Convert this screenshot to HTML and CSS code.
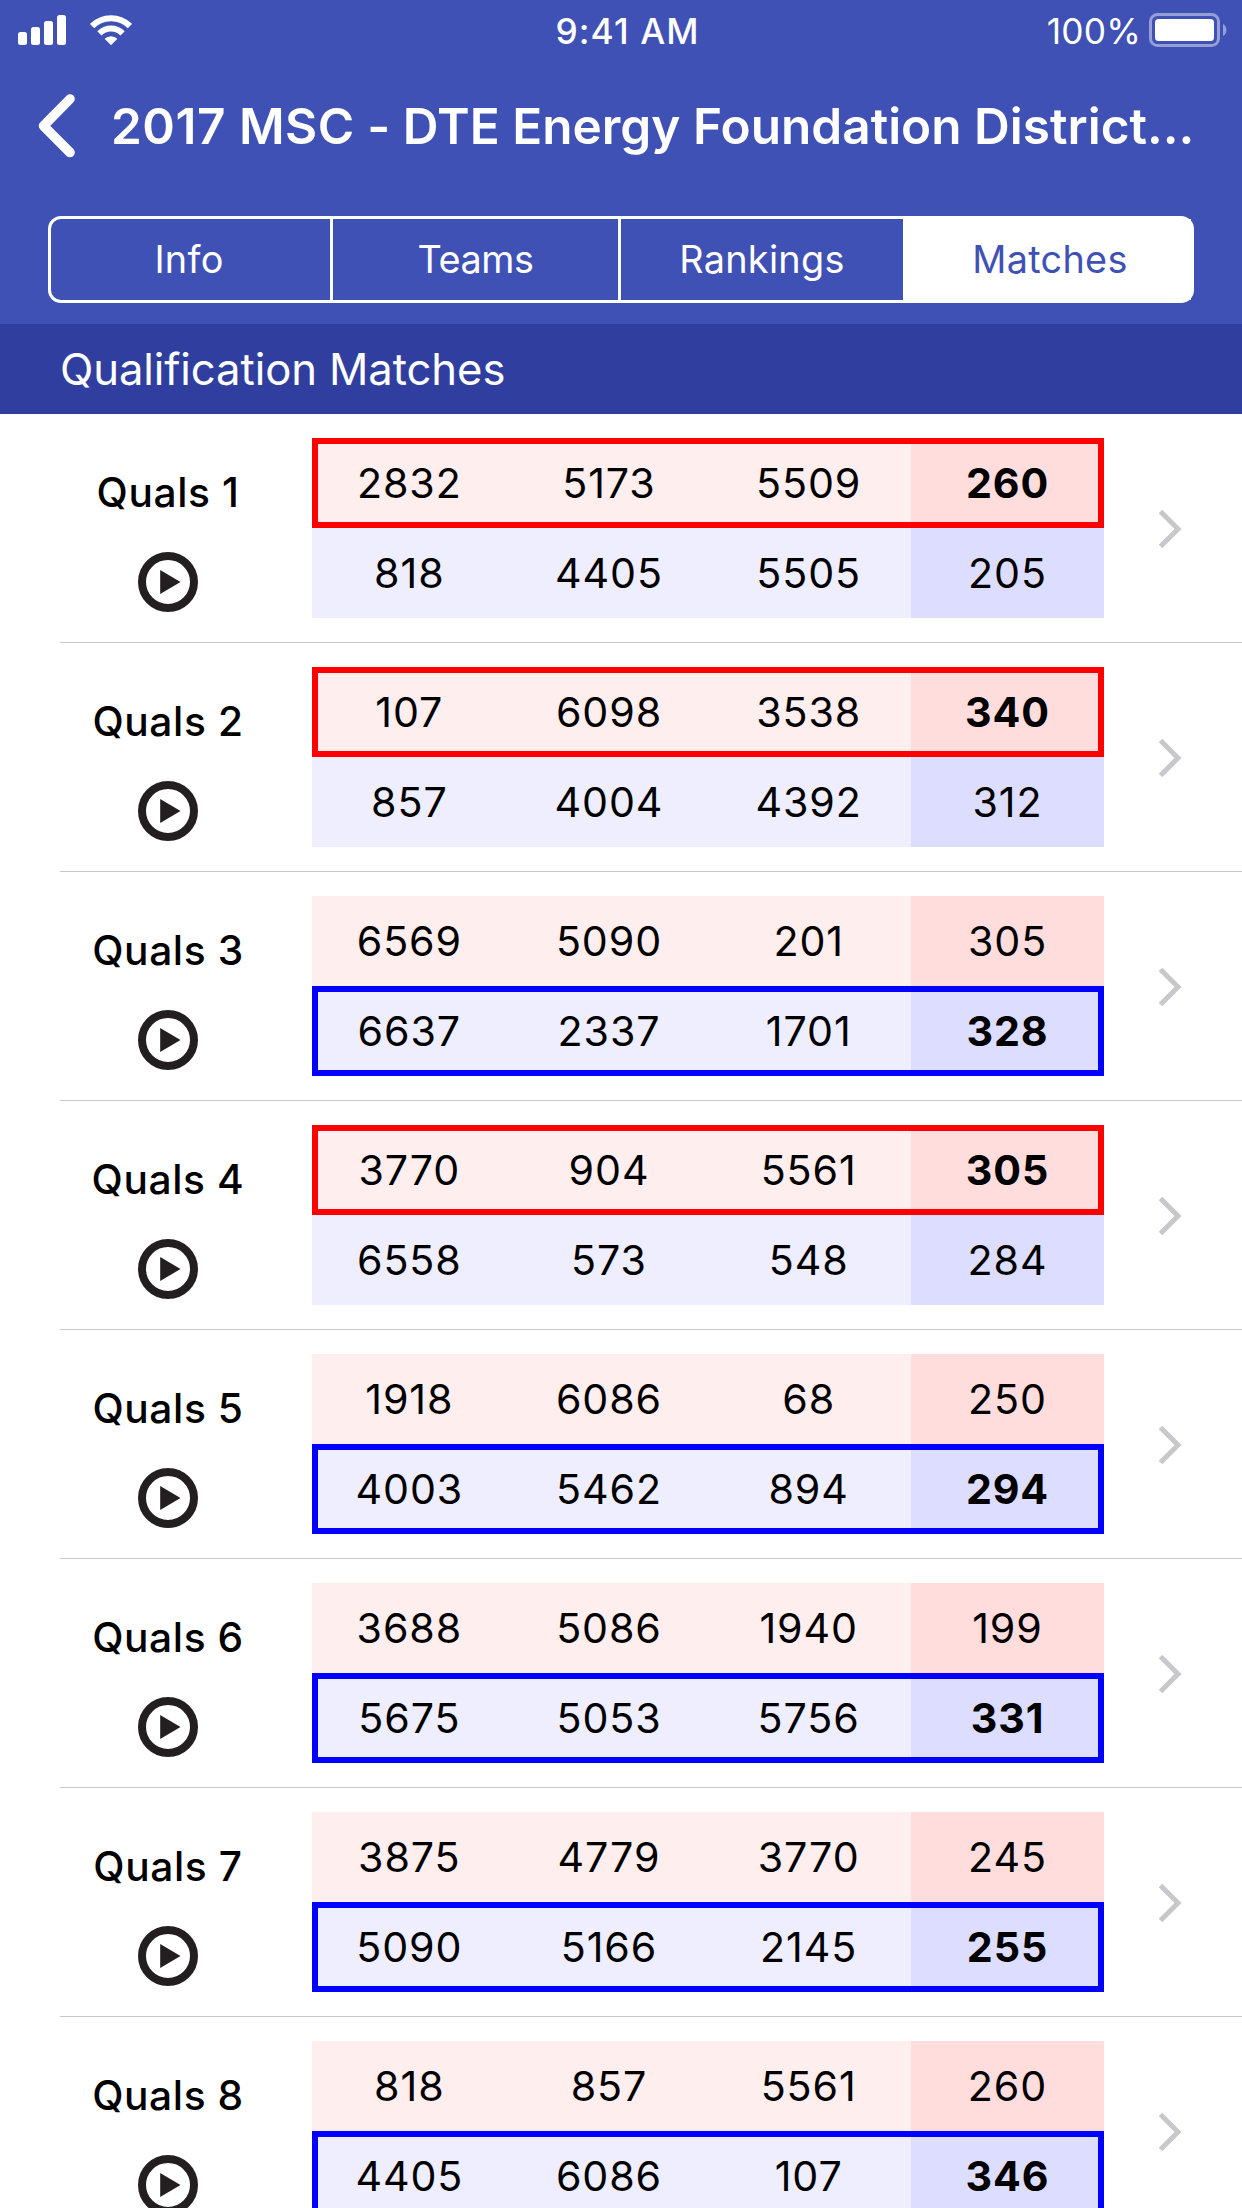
FILE: index.html
```html
<!DOCTYPE html>
<html lang="en">
<head>
<meta charset="utf-8">
<title>2017 MSC - Matches</title>
<link rel="stylesheet" href="styles.css">
</head>
<body>
<svg class="symbols" width="0" height="0" aria-hidden="true">
  <symbol id="play" viewBox="0 0 60 60">
    <circle cx="30" cy="30" r="26" fill="none" stroke="#231f20" stroke-width="8"/>
    <path d="M22.2 18v24l20.3-12z" fill="#231f20"/>
  </symbol>
  <symbol id="chevron" viewBox="0 0 26 40">
    <path d="M2.5 2.5L20 20L2.5 37.5" fill="none" stroke="#c7c7cc" stroke-width="5"/>
  </symbol>
</svg>

<header class="header">
  <div class="status">
    <div class="status-left">
      <svg width="48" height="30" viewBox="0 0 48 30" fill="#fff">
        <rect x="0" y="17" width="9" height="13" rx="2.5"/>
        <rect x="13" y="12" width="9" height="18" rx="2.5"/>
        <rect x="26" y="6" width="9" height="24" rx="2.5"/>
        <rect x="39" y="0" width="9" height="30" rx="2.5"/>
      </svg>
      <svg width="42" height="30" viewBox="0 0 42 30">
        <path d="M2.1 11A26.8 26.8 0 0 1 39.9 11" fill="none" stroke="#fff" stroke-width="6"/>
        <path d="M9.4 18.3A16.5 16.5 0 0 1 32.6 18.3" fill="none" stroke="#fff" stroke-width="6"/>
        <path d="M14.6 23.8A9.1 9.1 0 0 1 27.4 23.8L21 30.2z" fill="#fff"/>
      </svg>
    </div>
    <div class="time">9:41 AM</div>
    <div class="status-right">
      <span class="percent">100%</span>
      <svg width="78" height="34" viewBox="0 0 78 34">
        <rect x="1.5" y="1.5" width="68" height="31" rx="7" fill="none" stroke="#fff" stroke-opacity=".45" stroke-width="3"/>
        <rect x="6" y="6" width="59" height="22" rx="3.5" fill="#fff"/>
        <path d="M74 11C78.6 13 78.6 21 74 23z" fill="#fff" fill-opacity=".45"/>
      </svg>
    </div>
  </div>
  <div class="nav">
    <svg class="back" width="37" height="64" viewBox="0 0 37 64">
      <path d="M32 5L5.5 31.8L32 58.5" fill="none" stroke="#fff" stroke-width="9.6" stroke-linecap="round" stroke-linejoin="round"/>
    </svg>
    <h1 class="title"><span class="event">2017 MSC</span> - DTE Energy Foundation District…</h1>
  </div>
  <nav class="tabs">
    <a class="tab info-tab">Info</a>
    <a class="tab teams">Teams</a>
    <a class="tab">Rankings</a>
    <a class="tab active">Matches</a>
  </nav>
</header>

<h2 class="section">Qualification Matches</h2>

<ul class="matches">
  <li class="match">
    <div class="info"><span class="name">Quals 1</span><svg class="play"><use href="#play"/></svg></div>
    <div class="alliances">
      <div class="alliance red win"><span>2832</span><span>5173</span><span>5509</span><b>260</b></div>
      <div class="alliance blue"><span>818</span><span>4405</span><span>5505</span><b>205</b></div>
    </div>
    <svg class="chevron"><use href="#chevron"/></svg>
  </li>
  <li class="match">
    <div class="info"><span class="name">Quals 2</span><svg class="play"><use href="#play"/></svg></div>
    <div class="alliances">
      <div class="alliance red win"><span>107</span><span>6098</span><span>3538</span><b>340</b></div>
      <div class="alliance blue"><span>857</span><span>4004</span><span>4392</span><b>312</b></div>
    </div>
    <svg class="chevron"><use href="#chevron"/></svg>
  </li>
  <li class="match">
    <div class="info"><span class="name">Quals 3</span><svg class="play"><use href="#play"/></svg></div>
    <div class="alliances">
      <div class="alliance red"><span>6569</span><span>5090</span><span>201</span><b>305</b></div>
      <div class="alliance blue win"><span>6637</span><span>2337</span><span>1701</span><b>328</b></div>
    </div>
    <svg class="chevron"><use href="#chevron"/></svg>
  </li>
  <li class="match">
    <div class="info"><span class="name">Quals 4</span><svg class="play"><use href="#play"/></svg></div>
    <div class="alliances">
      <div class="alliance red win"><span>3770</span><span>904</span><span>5561</span><b>305</b></div>
      <div class="alliance blue"><span>6558</span><span>573</span><span>548</span><b>284</b></div>
    </div>
    <svg class="chevron"><use href="#chevron"/></svg>
  </li>
  <li class="match">
    <div class="info"><span class="name">Quals 5</span><svg class="play"><use href="#play"/></svg></div>
    <div class="alliances">
      <div class="alliance red"><span>1918</span><span>6086</span><span>68</span><b>250</b></div>
      <div class="alliance blue win"><span>4003</span><span>5462</span><span>894</span><b>294</b></div>
    </div>
    <svg class="chevron"><use href="#chevron"/></svg>
  </li>
  <li class="match">
    <div class="info"><span class="name">Quals 6</span><svg class="play"><use href="#play"/></svg></div>
    <div class="alliances">
      <div class="alliance red"><span>3688</span><span>5086</span><span>1940</span><b>199</b></div>
      <div class="alliance blue win"><span>5675</span><span>5053</span><span>5756</span><b>331</b></div>
    </div>
    <svg class="chevron"><use href="#chevron"/></svg>
  </li>
  <li class="match">
    <div class="info"><span class="name">Quals 7</span><svg class="play"><use href="#play"/></svg></div>
    <div class="alliances">
      <div class="alliance red"><span>3875</span><span>4779</span><span>3770</span><b>245</b></div>
      <div class="alliance blue win"><span>5090</span><span>5166</span><span>2145</span><b>255</b></div>
    </div>
    <svg class="chevron"><use href="#chevron"/></svg>
  </li>
  <li class="match">
    <div class="info"><span class="name">Quals 8</span><svg class="play"><use href="#play"/></svg></div>
    <div class="alliances">
      <div class="alliance red"><span>818</span><span>857</span><span>5561</span><b>260</b></div>
      <div class="alliance blue win"><span>4405</span><span>6086</span><span>107</span><b>346</b></div>
    </div>
    <svg class="chevron"><use href="#chevron"/></svg>
  </li>
</ul>
</body>
</html>
```
FILE: styles.css
```css
* { box-sizing: border-box; }

html, body {
  height: 2208px;
  overflow: hidden;
}

body {
  margin: 0;
  background: #fff;
  color: #000;
  font-family: Inter, "Liberation Sans", sans-serif;
}

svg { display: block; flex: none; }

.symbols { display: none; }

/* Header */
.header {
  height: 324px;
  background: #3f51b5;
  color: #fff;
}

.status {
  display: flex;
  align-items: center;
  height: 60px;
  padding: 3px 15px 0 18px;
  font-size: 35.3px;
  line-height: 42px;
}

.status-left, .status-right {
  display: flex;
  flex: 1;
  align-items: center;
}

.status-left { gap: 24px; padding-bottom: 3px; }

.status-right { justify-content: flex-end; gap: 8px; }

.status-right svg { margin-bottom: 3px; }

.percent { letter-spacing: 0.2px; }

.time {
  margin-left: 10px;
  font-weight: 500;
  letter-spacing: 1.1px;
}

.nav {
  display: flex;
  align-items: center;
  height: 132px;
  padding-left: 38px;
}

.title {
  margin: 0 0 0 36px;
  font-size: 49.5px;
  font-weight: 600;
  line-height: 60px;
  letter-spacing: 0.02px;
  white-space: nowrap;
}

.event { letter-spacing: 0.5px; }

.tabs {
  display: grid;
  grid-template-columns: 282px 288px 282px 288px;
  height: 87px;
  margin: 24px 48px 0;
  border: 3px solid #fff;
  border-radius: 13px;
  font-size: 37.8px;
  line-height: 81px;
  letter-spacing: 0.3px;
  text-align: center;
}

.tab { border-right: 3px solid #fff; }

.tab:nth-child(3) { border-right: 0; }

.info-tab { padding-right: 3px; }

.teams { letter-spacing: -0.4px; }

.active {
  border-right: 0;
  padding-left: 6px;
  background: #fff;
  color: #3f51b5;
}

.section {
  height: 90px;
  margin: 0;
  padding-left: 60px;
  background: #303f9f;
  color: #fff;
  font-size: 43.6px;
  font-weight: 400;
  line-height: 92px;
  letter-spacing: -0.08px;
}

/* Match list */
.matches {
  margin: 0;
  padding: 0;
  list-style: none;
}

.match {
  display: flex;
  height: 229px;
  margin-left: 60px;
  border-bottom: 1px solid #c8c7cc;
}

.info {
  display: flex;
  flex-direction: column;
  align-items: center;
  gap: 34px;
  width: 216px;
  padding-top: 54px;
}

.name {
  font-size: 40.7px;
  font-weight: 500;
  line-height: 50px;
  letter-spacing: 0.6px;
}

.play { width: 60px; height: 60px; }

.alliances {
  width: 792px;
  margin: 24px 0 24px 36px;
}

.alliance {
  display: grid;
  grid-template-columns: repeat(3, 1fr) 193px;
  height: 90px;
  font-size: 41.2px;
  line-height: 90px;
  letter-spacing: 0.9px;
  text-align: center;
}

.alliance span { padding-right: 5px; }

.alliance b { font-weight: 400; }

.red { background: #fee; }
.red b { background: #fdd; }
.blue { background: #eef; }
.blue b { background: #ddf; }

.win {
  position: relative;
}

.win b { font-weight: 700; }

/* Winner frame, drawn over the cell backgrounds */
.win::after {
  content: "";
  position: absolute;
  inset: 0;
  border: 6px solid #f00;
}

.blue.win::after { border-color: #00f; }

.chevron {
  width: 26px;
  height: 40px;
  margin: 95px 0 0 54px;
}
```
